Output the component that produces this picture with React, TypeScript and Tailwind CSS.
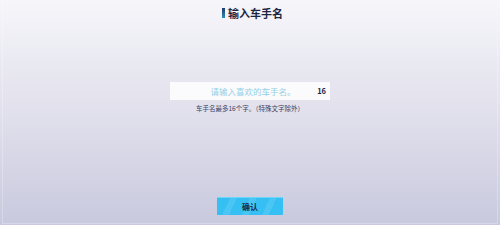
export default function App() {
  return (
    <div
      className="relative w-[500px] h-[225px] overflow-hidden flex flex-col items-center bg-gradient-to-b from-[#f6f6fa] via-[#e1e0ec] to-[#c8c9de]"
      style={{ fontFamily: '"Noto Sans CJK SC", "Noto Sans", sans-serif' }}
    >
      <div className="absolute inset-x-[2px] inset-y-[1px] border border-white/25 pointer-events-none" />
      <div className="mt-[6px] ml-[5px] flex items-center gap-[3px] h-[14px]">
        <div className="w-[3px] h-[10px] bg-gradient-to-b from-[#1f3a6e] to-[#2a8fb8]" />
        <span className="text-[11px] font-bold text-[#1c2746] leading-none">输入车手名</span>
      </div>
      <div className="mt-[62px] w-[160px] h-[18px] bg-white/85 flex items-center relative">
        <span className="flex-1 text-center text-[8.5px] text-[#93d0e6] leading-none pl-[6px]">请输入喜欢的车手名。</span>
        <span className="absolute right-[4px] text-[7.5px] font-bold text-[#1c2746] leading-none">16</span>
      </div>
      <div className="mt-[5px] text-[6.5px] text-[#3e4363] leading-none">车手名最多16个字。（特殊文字除外）</div>
      <div className="mt-auto mb-[10px] w-[66px] h-[18px] flex items-center justify-center bg-[#36bff3] bg-[repeating-linear-gradient(115deg,rgba(255,255,255,0)_0px,rgba(255,255,255,0)_12px,rgba(255,255,255,0.1)_12px,rgba(255,255,255,0.1)_18px)] border-t border-[#6fd6fb]">
        <span className="text-[8px] font-bold text-[#142a4a] leading-none">确认</span>
      </div>
    </div>
  );
}
